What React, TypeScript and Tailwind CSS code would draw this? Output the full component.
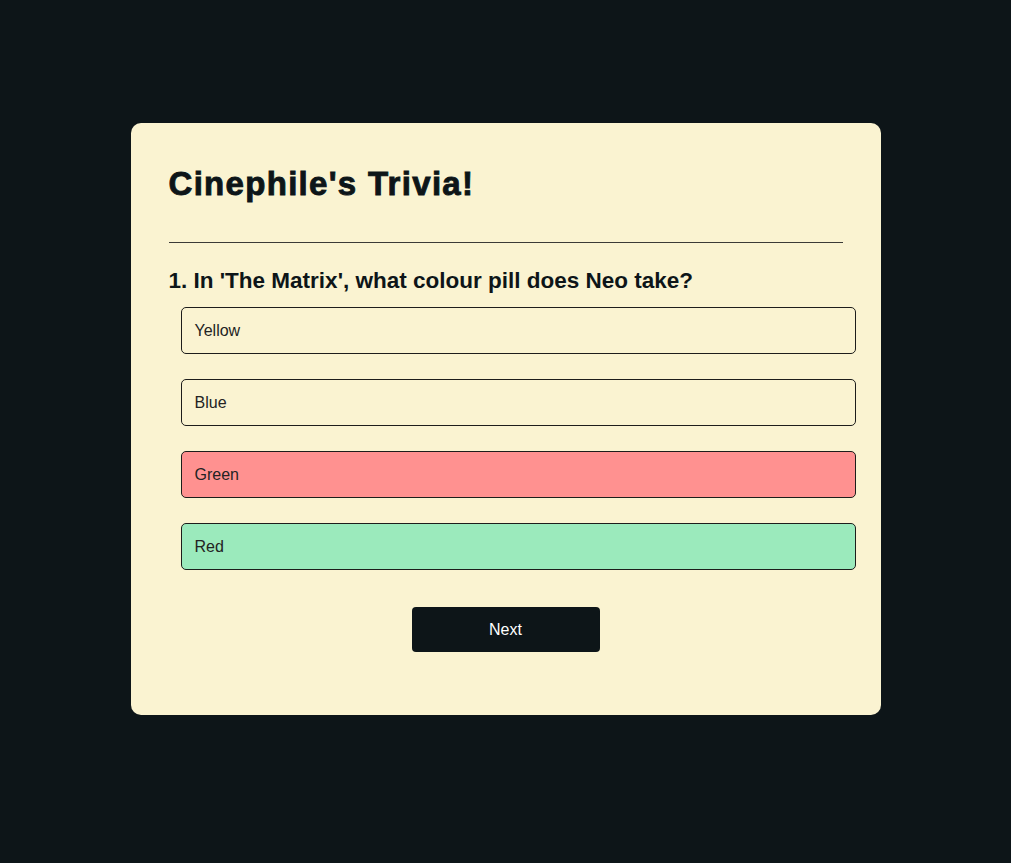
const options = [
  { label: "Yellow", tone: "bg-[#faf3d1]" },
  { label: "Blue", tone: "bg-[#faf3d1]" },
  { label: "Green", tone: "bg-[#ff9190]" },
  { label: "Red", tone: "bg-[#9beabc]" },
];

const App = () => {
  return (
    <div className="min-h-screen bg-[#0d1518] flex justify-center pt-[123px] font-['Liberation_Sans',Arial,sans-serif]">
      <div className="w-[750px] h-[592px] rounded-[10px] bg-[#faf3d1] px-[38px] pt-[42px] pb-[63px] text-[#0d1518]">
        <h1 className="text-[33px] leading-[37px] font-bold tracking-[1.3px] [-webkit-text-stroke:0.9px_#0d1518]">
          Cinephile's Trivia!
        </h1>
        <hr className="mt-[40px] border-0 h-px bg-[#3b3a36]" />

        <h2 className="mt-[25px] text-[22.5px] leading-[25px] font-bold">
          1. In 'The Matrix', what colour pill does Neo take?
        </h2>

        <ul className="mt-[14px] ml-[12px] w-[675px] flex flex-col gap-[25px]">
          {options.map((o) => (
            <li
              key={o.label}
              className={`h-[47px] flex items-center px-[13px] border border-[#1d1d1b] rounded-[5px] text-[16px] text-[#232323] ${o.tone}`}
            >
              {o.label}
            </li>
          ))}
        </ul>

        <div className="flex justify-center mt-[37px]">
          <button className="w-[188px] h-[45px] rounded-[4px] bg-[#0d1518] text-white text-[16px]">
            Next
          </button>
        </div>
      </div>
    </div>
  );
};

export default App;
